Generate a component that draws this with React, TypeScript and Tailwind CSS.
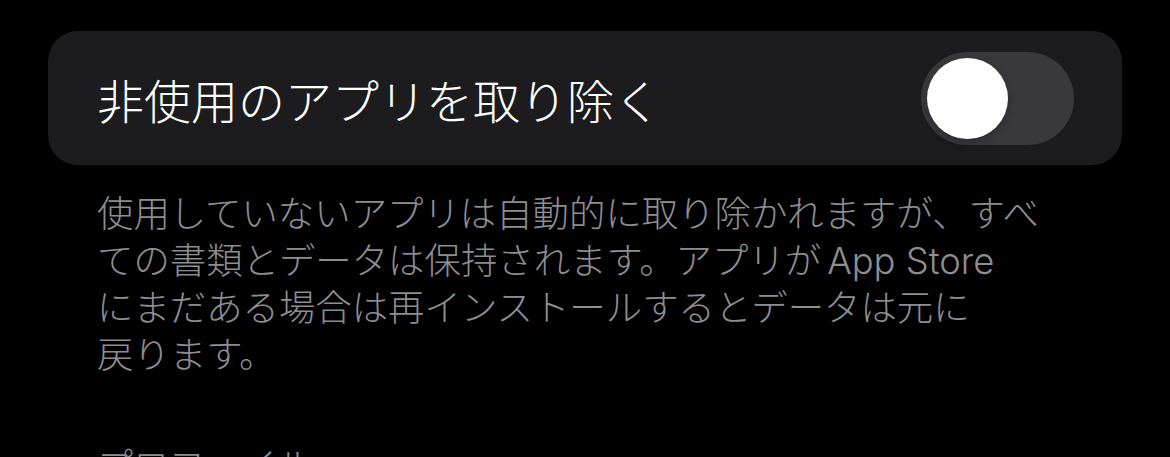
import React from "react";

const jp = "font-['Noto_Sans_CJK_JP','Noto_Sans',sans-serif]";

function Toggle({ on = false }: { on?: boolean }) {
  return (
    <div
      className={`flex h-[93px] w-[153px] shrink-0 items-center rounded-full p-[6px] ${
        on ? "justify-end bg-[#34c759]" : "justify-start bg-[#39393d]"
      }`}
    >
      <div className="h-[81px] w-[81px] rounded-full bg-white shadow-[0_3px_8px_rgba(0,0,0,0.25)]" />
    </div>
  );
}

export default function App() {
  return (
    <div className={`h-[457px] w-full overflow-hidden bg-black pl-[48px] pt-[31px] font-light ${jp}`}>
      <div className="flex h-[134px] w-[1074px] items-center justify-between rounded-[30px] bg-[#1c1c1e] pl-[49px] pr-[48px]">
        <span className="text-[47px] leading-none text-white">
          非使用のアプリを取り除く
        </span>
        <Toggle />
      </div>

      <p className="mt-[23px] pl-[49px] text-[36.4px] leading-[47px] text-[#8d8d92]">
        <span className="block h-[47px] whitespace-nowrap">
          使用していないアプリは自動的に取り除かれますが、すべ
        </span>
        <span className="block h-[47px] whitespace-nowrap">
          ての書類とデータは保持されます。アプリが
          <span className="ml-[6px] font-['Inter',sans-serif] font-light">App Store</span>
        </span>
        <span className="block h-[47px] whitespace-nowrap">
          にまだある場合は再インストールするとデータは元に
        </span>
        <span className="block h-[47px] whitespace-nowrap">戻ります。</span>
      </p>

      <div className="mt-[64px] pl-[49px] text-[36px] leading-[47px] text-[#8d8d92]">
        プロファイル
      </div>
    </div>
  );
}
